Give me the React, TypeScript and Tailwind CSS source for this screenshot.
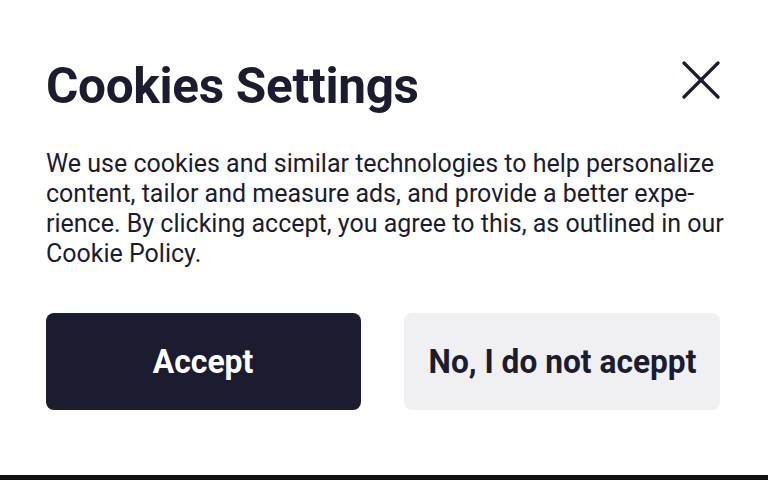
import React from 'react';

export default function App() {
  return (
    <div className="w-[768px] h-[480px] bg-white flex flex-col font-['Roboto',sans-serif] text-[#1c1c30] overflow-hidden">
      <div className="flex-1 px-[46px] pt-[61px]">
        <div className="flex items-start justify-between">
          <h1 className="text-[49.5px] font-bold leading-[50px] tracking-[-0.3px]">Cookies Settings</h1>
          <button className="mt-[-1px] mr-[1px] w-[40px] h-[40px] flex items-center justify-center">
            <svg width="38" height="38" viewBox="0 0 38 38" fill="none" stroke="#1c1c30" strokeWidth="3.2" strokeLinecap="round">
              <line x1="2" y1="2" x2="36" y2="36" />
              <line x1="36" y1="2" x2="2" y2="36" />
            </svg>
          </button>
        </div>
        <p className="mt-[38px] text-[25px] leading-[30px] whitespace-nowrap">
          We use cookies and similar technologies to help personalize
          <br />
          content, tailor and measure ads, and provide a better expe-
          <br />
          rience. By clicking accept, you agree to this, as outlined in our
          <br />
          Cookie Policy.
        </p>
        <div className="mt-[44px] flex gap-[43px]">
          <button className="w-[315px] h-[97px] rounded-[8px] bg-[#1c1c30] text-white text-[33px] font-bold">
            <span className="inline-block scale-x-[0.965]">Accept</span>
          </button>
          <button className="w-[316px] h-[97px] rounded-[8px] bg-[#f0f0f2] text-[#1c1c30] text-[33px] font-bold">
            <span className="inline-block scale-x-[0.96] whitespace-nowrap">No, I do not aceppt</span>
          </button>
        </div>
      </div>
      <div className="h-[5px] bg-[#111]" />
    </div>
  );
}
